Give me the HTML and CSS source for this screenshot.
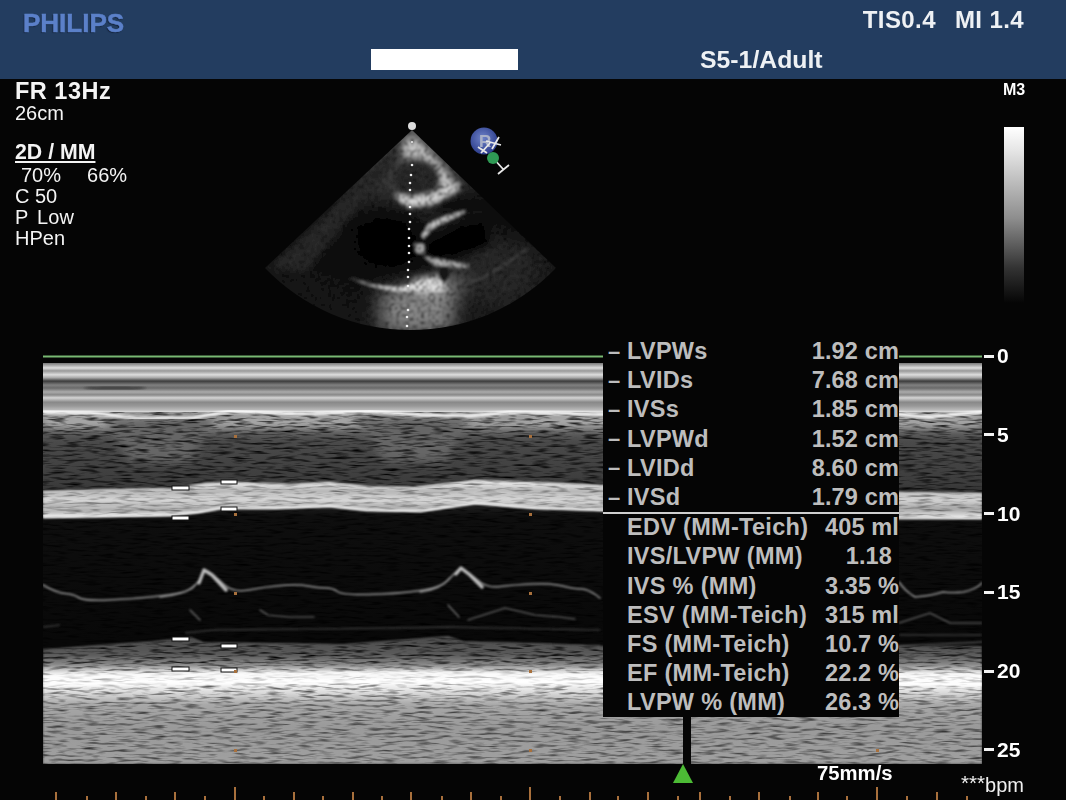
FILE: index.html
```html
<!DOCTYPE html>
<html lang="en">
<head>
<meta charset="utf-8">
<title>Philips M-mode echocardiogram</title>
<link rel="stylesheet" href="styles.css">
</head>
<body>
<div class="screen">
  <header class="header">
    <div class="header-row header-top">
      <div class="logo">PHILIPS</div>
      <div class="indices"><span>TIS0.4</span><span>MI 1.4</span></div>
    </div>
    <div class="header-row header-bottom">
      <div class="name-box"></div>
      <div class="probe">S5-1/Adult</div>
    </div>
  </header>

  <section class="top">
    <div class="readout">
      <div class="rate">FR 13Hz</div>
      <div class="line">26cm</div>
      <div class="mode">2D / MM</div>
      <div class="line gains"><span>70%</span><span>66%</span></div>
      <div class="line">C 50</div>
      <div class="line wide">P Low</div>
      <div class="line">HPen</div>
    </div>

    <svg class="sector" viewBox="250 120 320 220" width="320" height="220">
      <defs>
        <clipPath id="fan"><path d="M412 130L265 268A201.6 201.6 0 0 0 556 268Z"/></clipPath>
        <radialGradient id="fanFill" gradientUnits="userSpaceOnUse" cx="412" cy="130" r="205">
          <stop offset="0" stop-color="#5a5a5a"/>
          <stop offset=".28" stop-color="#3c3c3c"/>
          <stop offset=".42" stop-color="#222"/>
          <stop offset=".55" stop-color="#0e0e0e"/>
          <stop offset=".75" stop-color="#0f0f0f"/>
          <stop offset="1" stop-color="#1a1a1a"/>
        </radialGradient>
        <radialGradient id="orb" cx=".45" cy=".4" r=".6">
          <stop offset="0" stop-color="#6f83c8"/>
          <stop offset="1" stop-color="#2c3d8c"/>
        </radialGradient>
        <filter id="b05" x="-5%" y="-5%" width="110%" height="110%"><feGaussianBlur stdDeviation=".8"/></filter>
        <filter id="b1" x="-30%" y="-30%" width="160%" height="160%"><feGaussianBlur stdDeviation="1.3"/></filter>
        <filter id="b2" x="-30%" y="-50%" width="160%" height="200%"><feGaussianBlur stdDeviation="2"/></filter>
        <filter id="b3" x="-50%" y="-50%" width="200%" height="200%"><feGaussianBlur stdDeviation="3.5"/></filter>
        <filter id="b6" x="-60%" y="-60%" width="220%" height="220%"><feGaussianBlur stdDeviation="10"/></filter>
        <filter id="fanNoise" x="0" y="0" width="100%" height="100%" color-interpolation-filters="sRGB">
          <feTurbulence type="fractalNoise" baseFrequency=".28" numOctaves="2" seed="4"/>
          <feGaussianBlur stdDeviation=".5"/>
          <feColorMatrix values="1.7 0 0 0 .05 1.7 0 0 0 .05 1.7 0 0 0 .05 0 0 0 0 1"/>
        </filter>
      </defs>
      <g clip-path="url(#fan)">
        <g filter="url(#b05)">
          <rect x="250" y="120" width="320" height="220" fill="url(#fanFill)"/>
          <path d="M405 135L270 268L305 272L395 165Z" fill="#2c2c2c" filter="url(#b3)"/>
          <path d="M470 230L545 250L530 300L470 310Z" fill="#2a2a2a" filter="url(#b6)"/>
          <!-- dark chambers -->
          <path d="M355 225L378 210L412 214L420 240L416 260L395 270L358 260Z" fill="#060606" filter="url(#b6)"/>
          <path d="M428 245L460 226L485 222L490 245L455 256L430 256Z" fill="#030303" filter="url(#b3)"/>
          <ellipse cx="470" cy="205" rx="34" ry="9" fill="#0a0a0a" filter="url(#b3)"/>
          <!-- bright tissue -->
          <path d="M402 144L412 136L426 148L446 170L459 190L442 198L436 168L420 158L404 158Z" fill="#c8c8c8" filter="url(#b3)"/>
          <ellipse cx="416" cy="178" rx="22" ry="16" fill="#2c2c2c" filter="url(#b2)"/>
          <path d="M395 193L412 196L438 191L461 182L458 188L436 204L410 208L398 201Z" fill="#d4d4d4" filter="url(#b2)"/>
          <path d="M429 223L445 216L466 210L463 214L446 222L432 229L424 239L421 236Z" fill="#c4c4c4" filter="url(#b1)"/>
          <path d="M414 243L424 244L425 254L416 253Z" fill="#b5b5b5" filter="url(#b1)"/>
          <path d="M423 256L440 259L470 265L466 268L435 266Z" fill="#b5b5b5" filter="url(#b1)"/>
          <path d="M378 292L450 276L472 266L456 300L452 334L382 334Z" fill="#8a8a8a" filter="url(#b6)"/>
          <path d="M348 277Q375 287 400 287L430 279L440 290L400 292Q370 288 348 277Z" fill="#dcdcdc" filter="url(#b1)"/>
          <path d="M412 280L445 275L445 293L416 293Z" fill="#e0e0e0" filter="url(#b3)"/>
          <ellipse cx="444" cy="274" rx="5" ry="7" fill="#141414" filter="url(#b1)"/>
          <path d="M470 283Q500 270 528 248" fill="none" stroke="#4c4c4c" stroke-width="2" filter="url(#b1)"/>
          <rect x="250" y="120" width="320" height="220" filter="url(#fanNoise)" class="blend"/>
        </g>
      </g>
      <g class="dots">
        <circle cx="412" cy="142" r="1"/><circle cx="412" cy="165" r="1.3"/><circle cx="411" cy="175" r="1.3"/><circle cx="410" cy="183" r="1.3"/><circle cx="410" cy="190" r="1.3"/><circle cx="410" cy="207" r="1.3"/><circle cx="410" cy="214" r="1.3"/><circle cx="410" cy="222" r="1.3"/><circle cx="409" cy="229" r="1.3"/><circle cx="409" cy="238" r="1.3"/><circle cx="409" cy="246" r="1.3"/><circle cx="409" cy="253" r="1.3"/><circle cx="409" cy="262" r="1.3"/><circle cx="408" cy="270" r="1.3"/><circle cx="408" cy="277" r="1.3"/><circle cx="408" cy="286" r="1.3"/><circle cx="408" cy="310" r="1.3"/><circle cx="407" cy="317" r="1.3"/><circle cx="407" cy="326" r="1.3"/>
      </g>
      <circle cx="412" cy="126" r="4" fill="#ddd"/>
      <circle cx="484" cy="141" r="13.5" fill="url(#orb)"/>
      <text x="479" y="147" class="orb-letter">R</text>
      <path d="M486 141L501 145M499 137L492 149M490 143L481 153M478 147L487 153M493 158L503 169M498 174L509 165" fill="none" stroke="#e8e8e8" stroke-width="1.8"/>
      <circle cx="493" cy="158" r="6" fill="#2f9a55"/>
    </svg>

    <div class="gray-scale">
      <div class="map-name">M3</div>
      <div class="gray-bar"></div>
    </div>
  </section>

  <section class="mmode">
    <svg class="trace" viewBox="43 350 939 414" width="939" height="414">
      <defs>
        <linearGradient id="stripes" x1="0" y1="363" x2="0" y2="412" gradientUnits="userSpaceOnUse">
          <stop offset="0" stop-color="#777"/><stop offset=".1" stop-color="#ddd"/><stop offset=".16" stop-color="#999"/><stop offset=".24" stop-color="#ddd"/><stop offset=".3" stop-color="#aaa"/><stop offset=".37" stop-color="#3c3c3c"/><stop offset=".45" stop-color="#808080"/><stop offset=".51" stop-color="#6a6a6a"/><stop offset=".59" stop-color="#aaa"/><stop offset=".65" stop-color="#888"/><stop offset=".71" stop-color="#d4d4d4"/><stop offset=".8" stop-color="#888"/><stop offset=".88" stop-color="#999"/><stop offset=".96" stop-color="#bbb"/><stop offset="1" stop-color="#ddd"/>
        </linearGradient>
        <linearGradient id="back" x1="0" y1="410" x2="0" y2="764" gradientUnits="userSpaceOnUse">
          <stop offset="0" stop-color="#aaa"/><stop offset=".05" stop-color="#606060"/><stop offset=".09" stop-color="#4a4a4a"/><stop offset=".21" stop-color="#3c3c3c"/><stop offset=".3" stop-color="#0e0e0e"/><stop offset=".65" stop-color="#080808"/><stop offset="1" stop-color="#080808"/>
        </linearGradient>
        <linearGradient id="wall" x1="0" y1="640" x2="0" y2="764" gradientUnits="userSpaceOnUse">
          <stop offset="0" stop-color="#4c4c4c"/><stop offset=".12" stop-color="#5c5c5c"/><stop offset=".2" stop-color="#8a8a8a"/><stop offset=".26" stop-color="#e4e4e4"/><stop offset=".33" stop-color="#fff"/><stop offset=".42" stop-color="#ddd"/><stop offset=".52" stop-color="#a8a8a8"/><stop offset=".7" stop-color="#9a9a9a"/><stop offset="1" stop-color="#a0a0a0"/>
        </linearGradient>
        <linearGradient id="septum" x1="0" y1="482" x2="0" y2="518" gradientUnits="userSpaceOnUse">
          <stop offset="0" stop-color="#eee"/><stop offset=".25" stop-color="#b5b5b5"/><stop offset=".5" stop-color="#d4d4d4"/><stop offset=".75" stop-color="#a5a5a5"/><stop offset="1" stop-color="#eee"/>
        </linearGradient>
        <filter id="soft" x="-2%" y="-10%" width="104%" height="120%"><feGaussianBlur stdDeviation=".8"/></filter>
        <filter id="soft2" x="-5%" y="-50%" width="110%" height="200%"><feGaussianBlur stdDeviation="4"/></filter>
        <filter id="speckle" x="0" y="0" width="100%" height="100%" color-interpolation-filters="sRGB">
          <feTurbulence type="fractalNoise" baseFrequency=".06 .42" numOctaves="2" seed="7"/>
          <feGaussianBlur stdDeviation=".7 .35"/>
          <feColorMatrix values="2.4 0 0 0 -.3 2.4 0 0 0 -.3 2.4 0 0 0 -.3 0 0 0 0 1"/>
        </filter>
      </defs>
      <rect x="43" y="363" width="939" height="401" fill="url(#back)"/>
      <path d="M43 414L134 416L170 432L210 420L260 414L370 416L420 432L460 420L560 414L982 416V428H43Z" fill="#aaa" filter="url(#soft2)"/>
      <path d="M105 418L215 418L190 462L130 462ZM355 418L470 418L445 462L385 462Z" fill="#666" filter="url(#soft2)"/>
      <path d="M43 650L153 642L191 638L203 643L344 645L448 637L463 642L600 646L982 646V764H43Z" fill="url(#wall)" filter="url(#soft)"/>
      <path d="M43 492L115 490L172 489L207 484L237 483L291 485L329 483L367 487L413 488L475 481L536 483L600 486L899 493L982 494V518L899 517L600 510L536 508L475 503L421 511L367 510L329 506L275 508L222 508L199 512L172 515L115 516L43 517Z" fill="url(#septum)" filter="url(#soft)"/>
      <rect x="43" y="410" width="939" height="354" filter="url(#speckle)" class="blend"/>
      <path class="veil" d="M43 492L115 490L172 489L207 484L237 483L291 485L329 483L367 487L413 488L475 481L536 483L600 486L899 493L982 494V518L899 517L600 510L536 508L475 503L421 511L367 510L329 506L275 508L222 508L199 512L172 515L115 516L43 517Z" fill="url(#septum)" filter="url(#soft)"/>
      <rect class="veil light" x="43" y="664" width="939" height="100" fill="url(#wall)"/>
      <g filter="url(#soft)">
        <path d="M43 492L115 490L172 489L207 484L237 483L291 485L329 483L367 487L413 488L475 481L536 483L600 486L899 493L982 494" class="edge"/>
        <path d="M43 517L115 516L172 515L199 512L222 508L275 508L329 506L367 510L421 511L475 503L536 508L600 510L899 518L982 518" class="edge strong"/>
        <path d="M43 500H170L230 494L330 495L420 498L480 492L600 497M43 509L115 507L190 506L240 499L340 500L420 503L480 497L600 503" class="edge faint"/>
        <path d="M43 677L200 675L400 674L600 676L982 676M43 684L220 682L420 681L600 682L982 684" class="edge glow"/>
      </g>
      <rect x="43" y="363" width="939" height="49" fill="url(#stripes)"/>
      <ellipse cx="115" cy="388" rx="32" ry="1.6" fill="#3a3a3a" filter="url(#soft)"/>
      <path d="M43 412L90 413L136 418L193 418L230 411L300 414L370 411L420 415L470 416L510 412L600 414L899 414L930 417L982 412" class="edge band" filter="url(#soft)"/>
      <g filter="url(#soft)">
        <path d="M43 585Q57 593 65 593.5Q73 594 78.5 597.5Q84 601 109 600Q134 599 160 596Q187 593 193 587.5Q199 582 202 575.5Q205 569 209.5 572Q214 575 223.5 584Q233 593 248.5 590Q264 587 281 585.5Q298 584 308 586Q318 588 325.5 588Q333 588 337.5 591.5Q342 595 368 594.5Q394 594 417 591Q440 588 447.5 580.5Q455 573 458 570Q461 567 467.5 572Q474 577 481 582.5Q488 588 500.5 586.5Q513 585 532 584Q551 583 562.5 586Q574 589 581.5 589Q589 589 600 598M899 582Q906 592 915 597Q930 596 943 592Q955 593 963 592Q975 590 982 583" class="mitral"/>
        <path d="M199 583L204 570L212 575L226 590M456 574L461 568L470 575L482 587" class="mitral peak"/>
        <path d="M160 597Q185 595 195 585M420 592Q440 590 450 578" class="mitral"/>
        <path d="M260 610L268 615L290 617L314 617M448 605L459 617M468 620L505 608L535 615L559 617L575 619M899 623L930 613L950 623L982 623M190 610L200 620" class="mitral thin"/>
        <path d="M43 627L60 625M185 633L215 630L400 628L448 627L600 630M899 635L982 635" class="faintline"/>
        <path d="M43 650L153 642L191 638L203 643L344 645L448 637L463 642L600 646M899 646L982 642" class="mitral thin"/>
      </g>
      <rect x="43" y="355.5" width="560" height="2" class="green-line"/>
      <rect x="899" y="355.5" width="83" height="2" class="green-line"/>
      <g class="mark"><rect x="172" y="486" width="17" height="4"/><rect x="172" y="516" width="17" height="4"/><rect x="221" y="480" width="16" height="4"/><rect x="221" y="507" width="16" height="4"/><rect x="172" y="637" width="17" height="4"/><rect x="172" y="667" width="17" height="4"/><rect x="221" y="644" width="16" height="4"/><rect x="221" y="668" width="16" height="4"/></g>
      <g class="depth"><rect x="234" y="435" width="3" height="3"/><rect x="234" y="513" width="3" height="3"/><rect x="234" y="592" width="3" height="3"/><rect x="234" y="670" width="3" height="3"/><rect x="234" y="749" width="3" height="3"/><rect x="529" y="435" width="3" height="3"/><rect x="529" y="513" width="3" height="3"/><rect x="529" y="592" width="3" height="3"/><rect x="529" y="670" width="3" height="3"/><rect x="529" y="749" width="3" height="3"/><rect x="876" y="749" width="3" height="3"/></g>
    </svg>

    <div class="scale">
      <div class="scale-item">0</div>
      <div class="scale-item">5</div>
      <div class="scale-item">10</div>
      <div class="scale-item">15</div>
      <div class="scale-item">20</div>
      <div class="scale-item">25</div>
    </div>

    <div class="results">
      <div class="row"><span class="dash">–</span><span class="label">LVPWs</span><span class="value">1.92 cm</span></div>
      <div class="row"><span class="dash">–</span><span class="label">LVIDs</span><span class="value">7.68 cm</span></div>
      <div class="row"><span class="dash">–</span><span class="label">IVSs</span><span class="value">1.85 cm</span></div>
      <div class="row"><span class="dash">–</span><span class="label">LVPWd</span><span class="value">1.52 cm</span></div>
      <div class="row"><span class="dash">–</span><span class="label">LVIDd</span><span class="value">8.60 cm</span></div>
      <div class="row"><span class="dash">–</span><span class="label">IVSd</span><span class="value">1.79 cm</span></div>
      <div class="divider"></div>
      <div class="row"><span class="dash"></span><span class="label">EDV (MM-Teich)</span><span class="value">405 ml</span></div>
      <div class="row"><span class="dash"></span><span class="label">IVS/LVPW (MM)</span><span class="value inset">1.18</span></div>
      <div class="row"><span class="dash"></span><span class="label">IVS % (MM)</span><span class="value">3.35 %</span></div>
      <div class="row"><span class="dash"></span><span class="label">ESV (MM-Teich)</span><span class="value">315 ml</span></div>
      <div class="row"><span class="dash"></span><span class="label">FS (MM-Teich)</span><span class="value">10.7 %</span></div>
      <div class="row"><span class="dash"></span><span class="label">EF (MM-Teich)</span><span class="value">22.2 %</span></div>
      <div class="row"><span class="dash"></span><span class="label">LVPW % (MM)</span><span class="value">26.3 %</span></div>
    </div>
    <div class="stem"></div>
  </section>

  <footer class="footer">
    <svg class="ruler" viewBox="0 0 1066 36" width="1066" height="36">
      <path d="M56 28V36M87 32V36M116 28V36M146 32V36M175 28V36M205 32V36M235 23V36M264 32V36M294 28V36M323 32V36M353 28V36M382 32V36M411 28V36M442 32V36M471 28V36M501 32V36M530 23V36M560 32V36M590 28V36M618 32V36M648 28V36M678 32V36M700 28V36M730 32V36M759 28V36M790 32V36M818 28V36M847 32V36M877 23V36M907 32V36M937 28V36M967 32V36"/>
    </svg>
    <div class="cursor"></div>
    <div class="speed">75mm/s</div>
    <div class="bpm"><sup>***</sup>bpm</div>
  </footer>
</div>
</body>
</html>
```

FILE: styles.css
```css
* { box-sizing: border-box; }
html, body { margin: 0; padding: 0; background: #050505; }
body { font-family: "Liberation Sans", Arial, sans-serif; color: #fff; }
svg { display: block; }

.screen { width: 1066px; height: 800px; overflow: hidden; background: #050505; }

.header { height: 79px; background: #233d60; }
.header-row { display: flex; align-items: center; }
.header-top { height: 46px; justify-content: space-between; padding: 0 42px 0 23px; }
.header-bottom { height: 33px; padding-left: 371px; }
.logo { font-size: 26px; font-weight: 700; color: #5b80c9; text-shadow: -1px 1px 1px #14233c; -webkit-text-stroke: .5px #5b80c9; }
.indices { display: flex; gap: 19px; font-size: 24px; font-weight: 700; color: #eef1f4; margin-bottom: 6px; letter-spacing: .4px; }
.name-box { width: 147px; height: 21px; background: #fff; margin: -7px 182px 0 0; }
.probe { font-size: 24.8px; font-weight: 700; color: #eef1f4; margin-top: -5px; }

.top { display: flex; height: 271px; }
.readout { width: 250px; padding-left: 15px; font-size: 20px; line-height: 21px; color: #f4f4f4; }
.rate { font-size: 23.5px; font-weight: 700; line-height: 24px; letter-spacing: .5px; }
.line { height: 21px; }
.wide { word-spacing: 3px; letter-spacing: .2px; }
.mode { margin: 18px 0 2px; font-size: 21.3px; font-weight: 700; text-decoration: underline; }
.gains { display: flex; gap: 26px; padding-left: 6px; }
.sector { margin-top: 41px; }
.blend { mix-blend-mode: multiply; }
.veil { opacity: .55; }
.veil.light { opacity: .35; }
.dots circle { fill: #eee; }
.orb-letter { font: 700 17px "Liberation Sans", sans-serif; fill: #a9b0c8; }
.gray-scale { margin-left: auto; margin-right: 40px; width: 24px; display: flex; flex-direction: column; align-items: center; }
.map-name { font-size: 16px; font-weight: 700; line-height: 16px; margin-top: 3px; white-space: nowrap; }
.gray-bar { width: 20px; height: 176px; margin-top: 29px; background: linear-gradient(#fff 0%, #e4e4e4 14%, #8d8d8d 52%, #333 80%, #050505 100%); }

.mmode { position: relative; display: flex; height: 414px; padding-left: 43px; }
.edge { fill: none; stroke: #eee; stroke-width: 1.6; }
.edge.strong { stroke: #fff; stroke-width: 2.4; }
.edge.band { stroke: #fff; stroke-width: 3.4; opacity: .9; }
.edge.faint { stroke: #e4e4e4; stroke-width: 1.4; opacity: .6; }
.edge.glow { stroke: #fff; stroke-width: 5; opacity: .8; }
.mitral { fill: none; stroke: #999; stroke-width: 1.5; stroke-linejoin: round; stroke-linecap: round; }
.mitral.peak { stroke: #bdbdbd; stroke-width: 3.4; }
.mitral.thin { stroke: #777; stroke-width: 1.2; }
.faintline { fill: none; stroke: #3a3a3a; stroke-width: 1.4; }
.green-line { fill: #79b973; }
.mark rect { fill: #fff; stroke: #111; stroke-width: 1; }
.depth rect { fill: #a8703c; }

.scale { display: flex; flex-direction: column; justify-content: space-between; height: 416px; margin-top: -5px; font-size: 21px; font-weight: 700; line-height: 22px; padding-left: 2px; }
.scale-item { display: flex; align-items: center; gap: 3px; }
.scale-item::before { content: ""; width: 10px; height: 3px; background: #f2f2f2; }

.results { position: absolute; left: 603px; top: -13px; width: 296px; height: 380px; background: #050505; color: #bdbdbd; font-size: 23.5px; font-weight: 700; }
.row { display: flex; align-items: center; height: 29.2px; }
.dash { width: 24px; padding-left: 5px; flex: none; font-size: 22px; }
.label { flex: 1; white-space: nowrap; letter-spacing: .3px; }
.value { white-space: nowrap; letter-spacing: .15px; }
.value.inset { margin-right: 7px; }
.divider { height: 2px; background: #cfcfcf; margin: -.5px 0; }
.stem { position: absolute; left: 683px; top: 366px; width: 8px; height: 48px; background: #050505; }

.footer { position: relative; height: 36px; }
.ruler { position: absolute; left: 0; top: 0; fill: none; stroke: #a8703c; stroke-width: 2; }
.cursor { position: absolute; left: 673px; top: 0; width: 0; height: 0; border-left: 10px solid transparent; border-right: 10px solid transparent; border-bottom: 19px solid #4cbb35; }
.speed { position: absolute; left: 817px; top: -2px; font-size: 20.3px; font-weight: 700; line-height: 22px; }
.bpm { position: absolute; left: 961px; top: 9px; font-size: 20px; line-height: 24px; color: #f0f0f0; }
.bpm sup { font-size: 20.6px; line-height: 0; vertical-align: 2px; }
```
